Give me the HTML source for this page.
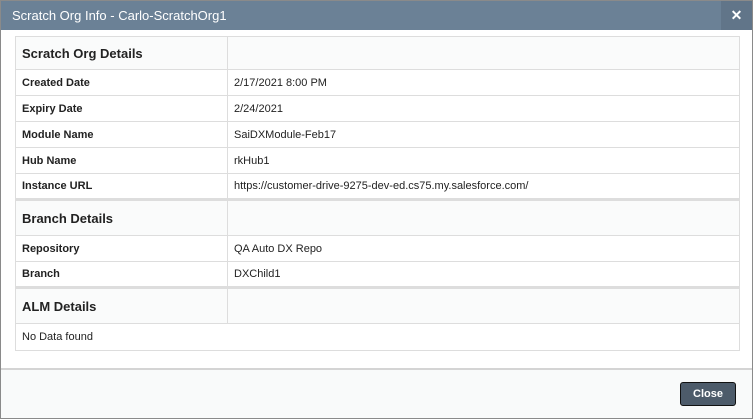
<!DOCTYPE html>
<html><head><style>
body{margin:0;width:753px;height:419px;overflow:hidden;background:#fff;font-family:"Liberation Sans",sans-serif;}
.dlg{position:absolute;left:0;top:0;width:751px;height:417px;border:1px solid #8a8a8a;background:#fff;}
.tb{height:29px;background:#6b8196;color:#fff;font-size:13px;line-height:29px;padding-left:11px;position:relative;}
.x{position:absolute;right:0;top:0;width:31px;height:29px;background:#617589;text-align:center;font-size:14px;font-weight:bold;}
table{position:absolute;left:14px;top:35px;width:725px;border-collapse:collapse;font-size:11px;color:#222;}
td{border:1px solid #ddd;padding:0 0 0 6px;height:26px;box-sizing:border-box;}
td.l{width:212px;font-weight:bold;}
tr.h td{height:36px;background:#fafbfb;font-size:13px;font-weight:bold;border-top:3px solid #ddd;}
tr.h.f td{height:33px;border-top:1px solid #ddd;}
tr.n td{height:27px;}
.ft{position:absolute;left:0;right:0;top:367px;bottom:0;border-top:2px solid #d4d4d4;background:#f9fafa;}
.btn{position:absolute;left:679px;top:12px;width:54px;height:22px;background:#4d5b6a;border:1px solid #111;border-radius:3px;color:#fff;font-size:11px;font-weight:bold;text-align:center;line-height:22px;}
</style></head><body><div class="dlg">
<div class="tb">Scratch Org Info - Carlo-ScratchOrg1<div class="x">✕</div></div>
<table>
<tr class="h f"><td class="l">Scratch Org Details</td><td></td></tr>
<tr><td class="l">Created Date</td><td>2/17/2021 8:00 PM</td></tr>
<tr><td class="l">Expiry Date</td><td>2/24/2021</td></tr>
<tr><td class="l">Module Name</td><td>SaiDXModule-Feb17</td></tr>
<tr><td class="l">Hub Name</td><td>rkHub1</td></tr>
<tr><td class="l">Instance URL</td><td>https://customer-drive-9275-dev-ed.cs75.my.salesforce.com/</td></tr>
<tr class="h"><td class="l">Branch Details</td><td></td></tr>
<tr><td class="l">Repository</td><td>QA Auto DX Repo</td></tr>
<tr><td class="l">Branch</td><td>DXChild1</td></tr>
<tr class="h"><td class="l">ALM Details</td><td></td></tr>
<tr class="n"><td colspan="2">No Data found</td></tr>
</table>
<div class="ft"><div class="btn">Close</div></div>
</div></body></html>
